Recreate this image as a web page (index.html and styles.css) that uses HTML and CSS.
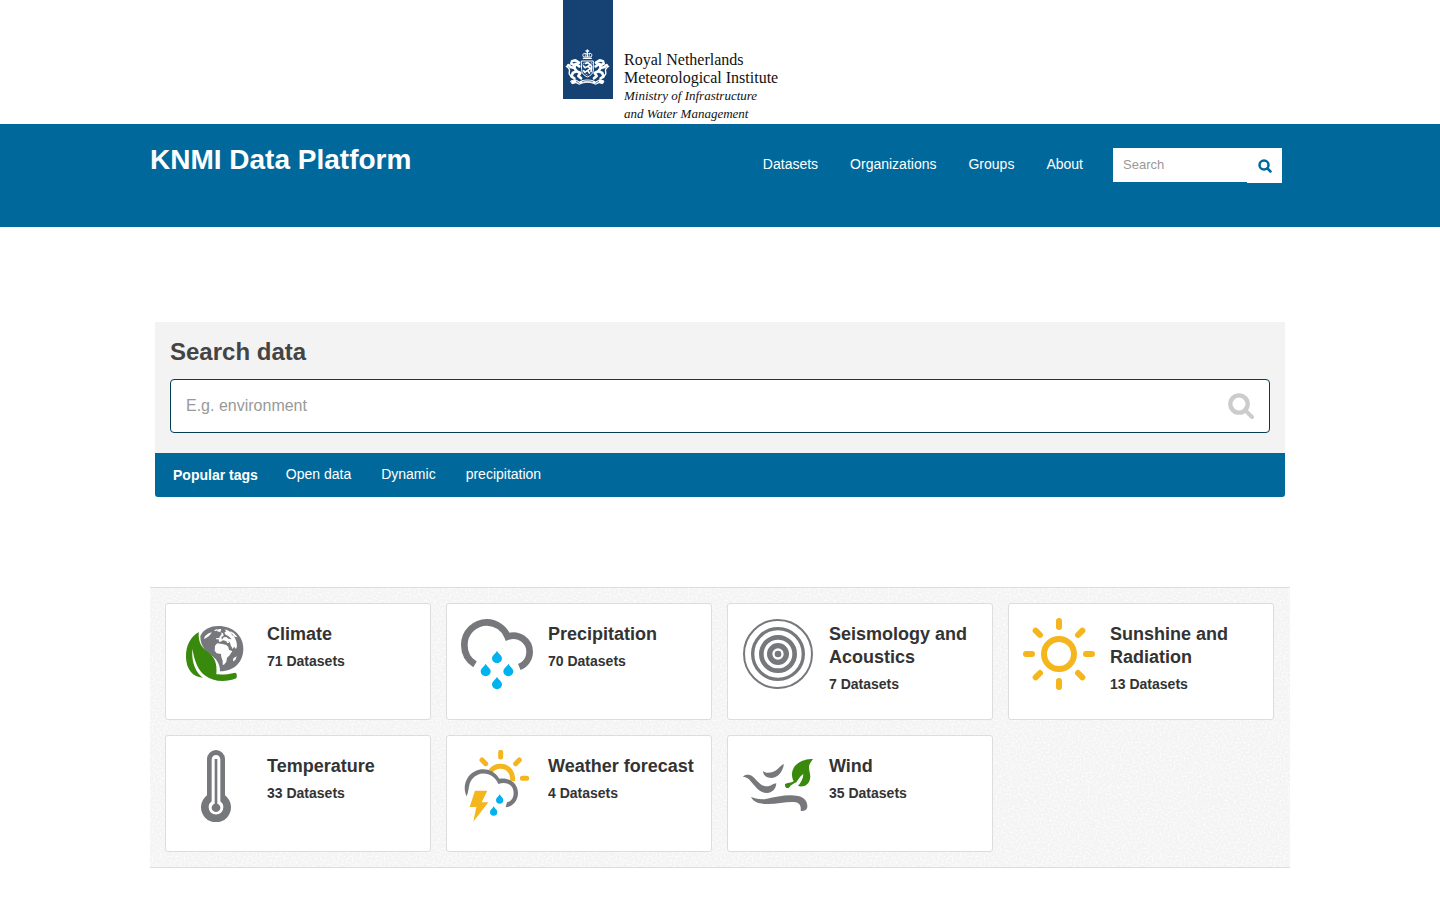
FILE: index.html
```html
<!DOCTYPE html>
<html lang="en">
<head>
<meta charset="utf-8">
<meta name="viewport" content="width=device-width, initial-scale=1">
<title>KNMI Data Platform</title>
<link rel="stylesheet" href="styles.css">
</head>
<body>
<div class="brand">
  <div class="ribbon">
    <svg class="arms" viewBox="30 27 138 114" role="img" aria-label="Coat of arms of the Netherlands">
      <g fill="none" stroke="#fff" stroke-width="4" stroke-linecap="round" stroke-linejoin="round">
        <path d="M85 50C80 43 86 36 97 43C108 36 114 43 109 50Z" stroke-width="3"/>
        <path d="M97 30V49M93 33H101M85 55H109" stroke-width="4"/>
        <path d="M90 42L92 49M104 42L102 49" stroke-width="2"/>
        <path d="M80 63H115V90C115 101 106 107 97 111C88 107 80 101 80 90Z" stroke-width="3"/>
        <path d="M91 70L99 68L105 73L99 79L106 85L98 91L103 99M99 79L90 83L86 78M98 91L89 97L86 92M108 95L110 81L107 74" stroke-width="5"/>
        <path d="M86 69L84 73M109 67L111 71M92 102L97 105" stroke-width="2"/>
        <path d="M72 68L61 61L51 64L49 71L57 75L65 73L73 79M61 72L58 84L65 94L76 99M58 84L46 81L42 76M65 94L54 98L49 109L58 115M76 99L70 108L78 115" stroke-width="8"/>
        <path d="M46 106C36 101 50 91 40 84C35 80 36 75 40 73M34 79L39 82" stroke-width="4"/>
        <path d="M123 68L134 61L144 64L146 71L138 75L130 73L122 79M134 72L137 84L130 94L119 99M137 84L149 81L153 76M130 94L141 98L146 109L137 115M119 99L125 108L117 115" stroke-width="8"/>
        <path d="M149 106C159 101 145 91 155 84C160 80 159 75 155 73M161 79L156 82" stroke-width="4"/>
        <path d="M48 123L61 119L73 126C86 118 109 118 122 126L134 119L147 123L143 131L132 128L122 133C108 125 87 125 73 133L63 128L52 131Z" fill="#fff" stroke-width="3"/>
        <path d="M64 124L73 130M131 124L122 130M82 125C92 121 103 121 113 125" stroke="#154273" stroke-width="2"/>
        <path d="M54 68H57M138 68H141" stroke="#154273" stroke-width="2"/>
      </g>
    </svg>
  </div>
  <p class="wordmark">Royal Netherlands<br>Meteorological Institute<em>Ministry of Infrastructure<br>and Water Management</em></p>
</div>

<header class="masthead">
  <div class="container masthead-row">
    <a class="site-title" href="#">KNMI Data Platform</a>
    <nav class="main-nav" aria-label="Main">
      <a href="#">Datasets</a>
      <a href="#">Organizations</a>
      <a href="#">Groups</a>
      <a href="#">About</a>
    </nav>
    <form class="site-search">
      <input type="text" placeholder="Search" aria-label="Search datasets">
      <button type="submit" aria-label="Submit">
        <svg width="14" height="14" viewBox="1 1 28 28" fill="none" stroke="#01689b" stroke-linecap="round"><circle cx="13" cy="13" r="9" stroke-width="5"/><path d="M20 20L26 26" stroke-width="5"/></svg>
      </button>
    </form>
  </div>
</header>

<main class="container">
  <section class="search-module">
    <form class="search-body">
      <h1><label for="data-search">Search data</label></h1>
      <div class="search-field">
        <input id="data-search" type="text" placeholder="E.g. environment">
        <button type="submit" aria-label="Search">
          <svg width="27" height="27" viewBox="3 4 81 81" fill="none" stroke="#ccc" stroke-linecap="round"><circle cx="36" cy="37" r="26" stroke-width="13"/><path d="M58 59L75 76" stroke-width="12"/></svg>
        </button>
      </div>
    </form>
    <div class="tags">
      <h2>Popular tags</h2>
      <a href="#">Open data</a>
      <a href="#">Dynamic</a>
      <a href="#">precipitation</a>
    </div>
  </section>

  <ul class="groups">
    <li><a class="card" href="#">
      <svg class="icon" viewBox="45 45 216 216" aria-hidden="true">
        <path fill="#77787b" d="M106 99C115 79 136 69 160 69C205 69 235 99 235 137C235 175 210 204 165 205C165 188 159 173 143 160C124 145 106 133 106 99Z"/>
        <path fill="#fff" d="M117 108C119 98 128 91 140 88C137 96 127 105 117 108ZM155 84C157 79 164 77 169 79L166 86C171 89 171 96 165 99L163 105H154L153 109H161L162 116H167L174 112L183 114L187 120H192L190 113L195 119L197 127L203 138L207 131L213 138L216 130L215 119C211 101 199 86 185 80L178 80L184 84L178 89L182 95L190 99L200 109L190 107L184 102L176 103L171 110L169 102L176 98L174 91L167 88ZM150 128L157 121L172 123L184 126L190 132L192 141L202 144L194 157L186 164L184 176L177 185H173V174L169 162L168 153L155 151L149 143ZM205 166L215 160C214 168 209 176 204 175ZM196 84L207 91L218 103L210 101L201 96ZM147 82L158 77L153 85Z"/>
        <path fill="#398a0c" d="M101 87C100 119 108 131 128 146C149 162 157 180 154 214C173 215 190 214 211 209C216 211 217 219 214 226C182 239 144 237 119 217C99 201 89 176 82 137C79 180 93 209 114 224C83 223 64 199 63 163C62 127 77 101 101 87Z"/>
      </svg>
      <div class="text"><h3>Climate</h3><strong>71 Datasets</strong></div></a></li>
    <li><a class="card" href="#">
      <svg class="icon" viewBox="45 45 216 216" aria-hidden="true">
        <path fill="none" stroke="#77787b" stroke-width="20" d="M87 184A68 68 0 0 1 55 126A68 68 0 0 1 123 58A68 68 0 0 1 185 101A49 49 0 0 1 251 147A49 49 0 0 1 220 192"/>
        <path fill="#00b2ee" d="M153 143C158 153 168 157 168 166A15 15 0 0 1 138 166C138 157 148 153 153 143ZM119 182C124 192 134 196 134 205A15 15 0 0 1 104 205C104 196 114 192 119 182ZM187 182C192 192 202 196 202 205A15 15 0 0 1 172 205C172 196 182 192 187 182ZM153 221C158 231 168 235 168 244A15 15 0 0 1 138 244C138 235 148 231 153 221Z"/>
      </svg>
      <div class="text"><h3>Precipitation</h3><strong>70 Datasets</strong></div></a></li>
    <li><a class="card" href="#">
      <svg class="icon" viewBox="45 45 216 216" aria-hidden="true">
        <g fill="none" stroke="#77787b"><circle cx="153" cy="153" r="102" stroke-width="6"/><circle cx="153" cy="153" r="76" stroke-width="10"/><circle cx="153" cy="153" r="50" stroke-width="14"/><circle cx="153" cy="153" r="25" stroke-width="16"/></g><circle cx="153" cy="153" r="10" fill="#77787b"/>
      </svg>
      <div class="text"><h3>Seismology and Acoustics</h3><strong>7 Datasets</strong></div></a></li>
    <li><a class="card" href="#">
      <svg class="icon" viewBox="45 45 216 216" aria-hidden="true">
        <g fill="none" stroke="#f5b51c" stroke-width="18" stroke-linecap="round"><circle cx="153" cy="153" r="45"/><path d="M153 54V72M153 234V252M54 153H72M234 153H252M83 83L96 96M210 210L223 223M223 83L210 96M96 210L83 223"/></g>
      </svg>
      <div class="text"><h3>Sunshine and Radiation</h3><strong>13 Datasets</strong></div></a></li>
    <li><a class="card" href="#">
      <svg class="icon" viewBox="45 45 216 216" aria-hidden="true">
        <path fill="#77787b" d="M126 72A27 27 0 0 1 180 72V181A45 45 0 1 1 126 181Z"/>
        <path fill="#fff" d="M140 73A13 13 0 0 1 166 73V199A22 22 0 1 1 140 199Z"/>
        <path fill="#77787b" d="M149 72H157V206A13 13 0 1 1 149 206Z"/>
      </svg>
      <div class="text"><h3>Temperature</h3><strong>33 Datasets</strong></div></a></li>
    <li><a class="card" href="#">
      <svg class="icon" viewBox="45 45 216 216" aria-hidden="true">
        <g fill="none" stroke="#f5b51c" stroke-width="15" stroke-linecap="round"><path d="M164 52V66M108 75L119 86M220 75L209 86M229 130H242"/><path stroke-linecap="butt" d="M134 108A37 37 0 0 1 164 94A36 36 0 0 1 199 138"/></g>
        <path fill="#77787b" d="M62 184C53 166 54 143 67 125C90 94 139 94 160 131C194 126 216 148 216 174C216 199 198 216 179 217L183 202C196 199 203 188 203 174C203 152 183 137 157 147C143 111 99 105 78 133C66 148 71 163 62 184Z"/>
        <path fill="#f5b51c" d="M87 167H124L107 202H127L82 260L91 216H71Z"/>
        <path fill="#00b2ee" d="M161 178C165 186 172 189 172 195A11 11 0 0 1 150 195C150 189 157 186 161 178ZM143 214C147 222 154 225 154 231A11 11 0 0 1 132 231C132 225 139 222 143 214Z"/>
      </svg>
      <div class="text"><h3>Weather forecast</h3><strong>4 Datasets</strong></div></a></li>
    <li><a class="card" href="#">
      <svg class="icon" viewBox="45 45 216 216" aria-hidden="true">
        <path fill="#77787b" d="M108 108C114 114 124 115 137 111C151 107 158 93 170 87C171 94 165 112 154 121C139 134 109 131 108 108ZM48 125C54 118 67 118 76 124C91 136 99 154 120 154C132 154 138 146 148 145C147 162 135 174 120 174C96 174 84 153 66 133C60 127 54 126 48 125ZM72 186C93 193 105 194 120 191C148 186 181 177 213 183C233 187 242 200 241 216C240 224 234 228 224 228L221 227C223 210 216 202 201 201C173 200 149 208 116 207C96 206 79 201 72 186Z"/>
        <path fill="#398a0c" d="M258 72C253 79 247 86 246 95C246 110 252 119 249 132C245 150 230 158 213 153C222 142 229 131 229 117C221 121 214 133 208 142C200 147 191 149 186 158C179 162 173 156 174 148C181 142 192 145 200 139C192 123 193 105 206 91C219 77 238 72 258 72Z"/>
      </svg>
      <div class="text"><h3>Wind</h3><strong>35 Datasets</strong></div></a></li>
  </ul>
</main>
</body>
</html>
```
FILE: styles.css
```css
* { box-sizing: border-box; }
body {
  margin: 0;
  background: #fff;
  color: #333;
  font: 14px/20px "Liberation Sans", Arial, sans-serif;
}
a { text-decoration: none; color: inherit; }
h1, h2, h3, p, ul { margin: 0; padding: 0; }
input, button { font-family: inherit; border: 0; border-radius: 0; margin: 0; }
input::placeholder { color: #999; opacity: 1; }
button { padding: 0; background: none; cursor: pointer; }

.container {
  width: 100%;
  max-width: 1170px;
  margin: 0 auto;
  padding: 0 15px;
}

.brand {
  display: flex;
  align-items: flex-start;
  gap: 11px;
  min-height: 124px;
  margin-left: calc(50% - 157px);
}
.ribbon {
  width: 50px;
  height: 99px;
  padding: 49px 2px 0;
  background: #154273;
}
.arms { display: block; width: 46px; height: 38px; }
.wordmark {
  padding-top: 51px;
  color: #111;
  font: 16px/18px "Liberation Serif", "Times New Roman", serif;
  white-space: nowrap;
}
.wordmark em { display: block; font-size: 13px; }

.masthead { min-height: 103px; background: #01689b; color: #fff; }
.masthead-row { display: flex; align-items: flex-start; }
.site-title {
  margin-right: auto;
  padding-top: 18px;
  font-size: 28px;
  line-height: 36px;
  font-weight: bold;
}
.main-nav { display: flex; gap: 32px; padding: 30px 30px 0 0; }
.site-search {
  display: flex;
  align-items: flex-start;
  padding-top: 24px;
  margin-right: 8px;
}
.site-search input {
  width: 134px;
  height: 34px;
  padding: 0 10px 2px;
  font-size: 13px;
  background: #fff;
}
.site-search button {
  display: grid;
  place-items: center;
  width: 35px;
  height: 35px;
  background: #fff;
}

.search-module { margin: 95px 5px 90px; }
.search-body { padding: 15px 15px 20px; background: #f3f3f3; }
.search-body h1 { font-size: 24px; line-height: 30px; color: #444; }
.search-field {
  display: flex;
  align-items: center;
  height: 54px;
  margin-top: 12px;
  padding-right: 14px;
  background: #fff;
  border: 1px solid #023e52;
  border-radius: 4px;
}
.search-field input {
  flex: 1;
  min-width: 0;
  height: 100%;
  padding: 0 15px;
  font-size: 16px;
  background: none;
}
.search-field svg { display: block; }
.tags {
  display: flex;
  gap: 30px;
  padding: 11px 18px;
  background: #01689b;
  color: #fff;
  border-radius: 0 0 3px 3px;
}
.tags h2 { margin-right: -2px; font-size: 14px; line-height: 22px; }

.groups {
  display: grid;
  grid-template-columns: repeat(auto-fill, 266px);
  gap: 15px;
  padding: 15px;
  list-style: none;
  background: #f3f3f3 url("data:image/svg+xml,%3Csvg xmlns='http://www.w3.org/2000/svg' width='100' height='100'%3E%3Cfilter id='n' x='0' y='0' width='100%25' height='100%25'%3E%3CfeTurbulence type='fractalNoise' baseFrequency='.5' numOctaves='2' stitchTiles='stitch'/%3E%3CfeColorMatrix values='0 0 0 0 1 0 0 0 0 1 0 0 0 0 1 2 0 0 0 -.8'/%3E%3C/filter%3E%3Crect width='100' height='100' filter='url(%23n)'/%3E%3C/svg%3E");
  border-top: 1px solid #ddd;
  border-bottom: 1px solid #ddd;
}
.card {
  display: flex;
  align-items: flex-start;
  gap: 15px;
  min-height: 117px;
  padding: 14px;
  background: #fff;
  border: 1px solid #ddd;
  border-radius: 3px;
}
.icon { flex: none; width: 72px; height: 72px; }
.text { padding-top: 5px; }
.text h3 { margin-bottom: 5px; font-size: 18px; line-height: 23px; }
.text strong { display: block; }
```
